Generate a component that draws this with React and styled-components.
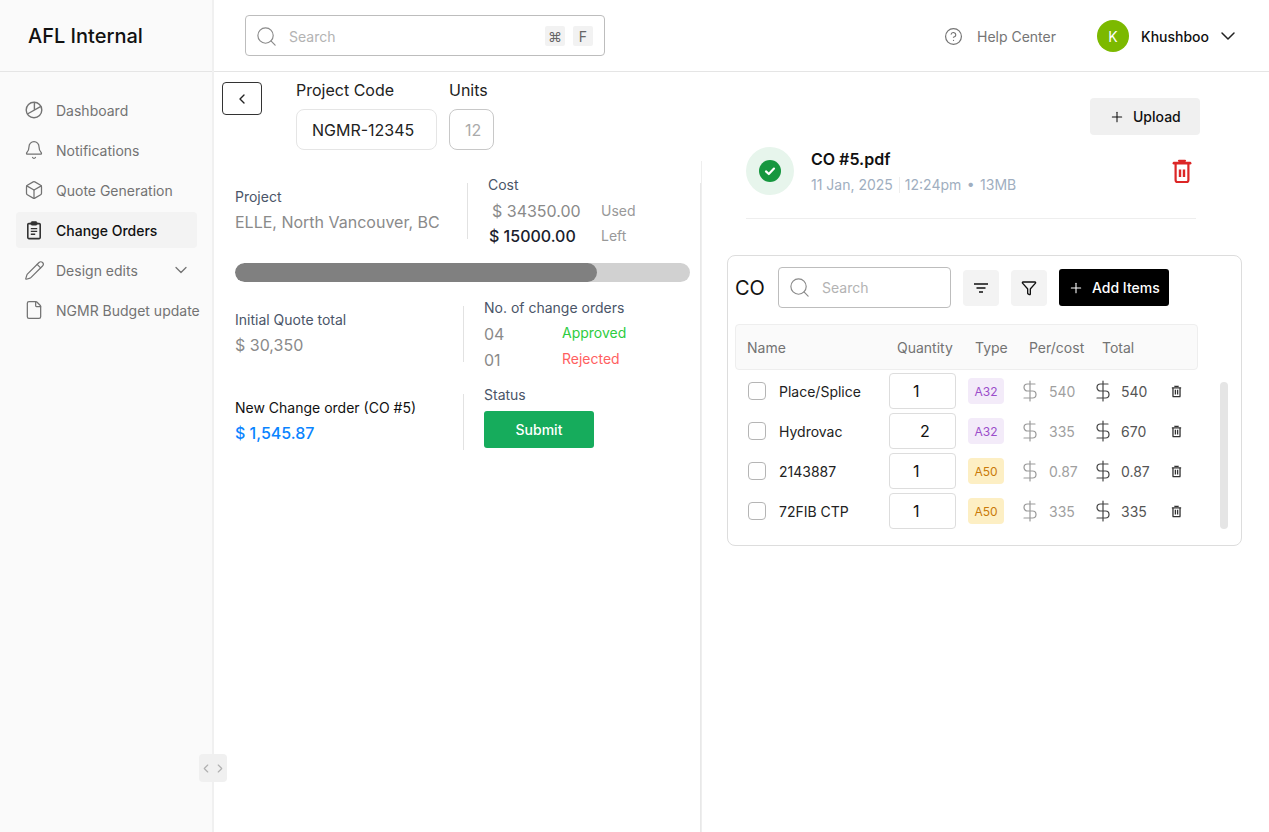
import React from 'react'
import styled, { createGlobalStyle } from 'styled-components'
import {
  Bell, Box, ChevronDown, ChevronLeft, ChevronRight, CircleHelp, DollarSign,
  File, Funnel, Pencil, Plus, Search,
} from 'lucide-react'

const GlobalStyle = createGlobalStyle`
  * { box-sizing: border-box; }
  body {
    margin: 0;
    background: #fff;
    font-family: Inter, "Liberation Sans", sans-serif;
    color: #111;
  }
`

const navItems = [
  { label: 'Dashboard', icon: <PieIcon /> },
  { label: 'Notifications', icon: <Bell size={20} strokeWidth={1.5} /> },
  { label: 'Quote Generation', icon: <Box size={20} strokeWidth={1.5} /> },
  { label: 'Change Orders', icon: <ClipboardIcon />, active: true },
  { label: 'Design edits', icon: <Pencil size={21} strokeWidth={1.4} />, caret: true },
  { label: 'NGMR Budget update', icon: <File size={20} strokeWidth={1.5} /> },
]

const rows = [
  { name: 'Place/Splice', qty: 1, type: 'A32', per: '540', total: '540' },
  { name: 'Hydrovac', qty: 2, type: 'A32', per: '335', total: '670' },
  { name: '2143887', qty: 1, type: 'A50', per: '0.87', total: '0.87' },
  { name: '72FIB CTP', qty: 1, type: 'A50', per: '335', total: '335' },
]

function PieIcon() {
  return (
    <svg width="20" height="20" viewBox="0 0 20 20" fill="none" stroke="currentColor" strokeWidth="1.4" strokeLinecap="round">
      <circle cx="10" cy="10" r="7.8" />
      <path d="M10.4 2.4V9.8M3.4 14L16.9 6.3" />
    </svg>
  )
}

function ClipboardIcon() {
  return (
    <svg width="20" height="20" viewBox="0 0 20 20" fill="none" stroke="#333" strokeWidth="1.6">
      <rect x="3.8" y="3.6" width="12.4" height="15" rx="1" />
      <rect x="7.2" y="1.8" width="5.6" height="3.2" rx=".6" fill="#333" strokeWidth="1" />
      <path d="M6.8 8.6h6.4M6.8 11.4h6.4M6.8 14.2h4.4" strokeWidth="1.4" />
    </svg>
  )
}

function SortIcon() {
  return (
    <svg width="16" height="12" viewBox="0 0 16 12" fill="none" stroke="#111" strokeWidth="1.5">
      <path d="M1 2h14M3.5 6h9M6 10h4" />
    </svg>
  )
}

function SmallTrash() {
  return (
    <svg width="13" height="13" viewBox="0 0 14 14" fill="none" stroke="#333" strokeWidth="1.4">
      <path d="M2 3h10M5.2 2V1.4h3.6V2" />
      <path d="M3.2 3.2v8.8c0 .3.2.6.6.6h6.4c.4 0 .6-.3.6-.6V3.2" />
      <path d="M5.8 5.2v5M8.2 5.2v5" />
    </svg>
  )
}

function RedTrash() {
  return (
    <svg width="20" height="26" viewBox="0 0 20 26" fill="none" stroke="#dc2626" strokeWidth="2.2">
      <path d="M2 5.2h16" strokeWidth="2.8" strokeLinecap="round" />
      <path d="M7 2.8h6" strokeWidth="2.2" strokeLinecap="round" />
      <path d="M3.6 6v16c0 1.2.8 2 1.8 2h9.2c1 0 1.8-.8 1.8-2V6" />
      <path d="M8 11.5v7.5M12 11.5v7.5" strokeWidth="2.4" />
    </svg>
  )
}

function CheckBadge() {
  return (
    <svg width="22" height="22" viewBox="0 0 22 22">
      <circle cx="11" cy="11" r="11" fill="#16973f" />
      <path d="M7 11.4l2.8 2.6L15 8.6" fill="none" stroke="#fff" strokeWidth="2.2" strokeLinecap="round" strokeLinejoin="round" />
    </svg>
  )
}

export default function App() {
  return (
    <Page>
      <GlobalStyle />
      <Sidebar>
        <Logo>AFL Internal</Logo>
        <Nav>
          {navItems.map((item) => (
            <NavItem key={item.label} $active={item.active}>
              <NavIcon>{item.icon}</NavIcon>
              <NavLabel>{item.label}</NavLabel>
              {item.caret && <Caret><ChevronDown size={20} strokeWidth={1.5} /></Caret>}
            </NavItem>
          ))}
        </Nav>
        <CollapseToggle>
          <ChevronLeft size={15} strokeWidth={2} />
          <ChevronRight size={15} strokeWidth={2} />
        </CollapseToggle>
      </Sidebar>

      <Content>
        <Header>
          <SearchBar>
            <Search size={23} strokeWidth={1.2} color="#8a8a8a" />
            <SearchText>Search</SearchText>
            <Key>⌘</Key>
            <Key>F</Key>
          </SearchBar>
          <HeaderRight>
            <HelpLink>
              <CircleHelp size={19} strokeWidth={1.5} />
              Help Center
            </HelpLink>
            <Avatar>K</Avatar>
            <UserName>Khushboo</UserName>
            <ChevronDown size={24} strokeWidth={1.5} color="#222" />
          </HeaderRight>
        </Header>

        <Main>
          <LeftColumn>
            <TopRow>
              <BackButton><ChevronLeft size={16} strokeWidth={2} /></BackButton>
              <Field>
                <FieldLabel>Project Code</FieldLabel>
                <FieldBox $width={141}>NGMR-12345</FieldBox>
              </Field>
              <Field>
                <FieldLabel>Units</FieldLabel>
                <FieldBox $width={45} $muted>12</FieldBox>
              </Field>
            </TopRow>

            <Panel>
              <StatRow>
                <StatLeft $width={232}>
                  <StatLabel>Project</StatLabel>
                  <StatValue>ELLE, North Vancouver, BC</StatValue>
                </StatLeft>
                <VLine />
                <StatRight>
                  <StatLabel>Cost</StatLabel>
                  <CostLine $top={3}>
                    <CostAmount $indent={4}>$ 34350.00</CostAmount>
                    <CostNote>Used</CostNote>
                  </CostLine>
                  <CostLine>
                    <CostAmount $strong>$ 15000.00</CostAmount>
                    <CostNote>Left</CostNote>
                  </CostLine>
                </StatRight>
              </StatRow>

              <Progress><ProgressFill style={{ width: `${(362 / 455) * 100}%` }} /></Progress>

              <StatRow $top={16}>
                <StatLeft $width={228}>
                  <StatLabel>Initial Quote total</StatLabel>
                  <StatValue>$ 30,350</StatValue>
                </StatLeft>
                <VLine />
                <StatRight>
                  <StatLabel>No. of change orders</StatLabel>
                  <CountLine $top={3}>
                    <CountValue>04</CountValue>
                    <CountTag $color="#2ecc40">Approved</CountTag>
                  </CountLine>
                  <CountLine>
                    <CountValue>01</CountValue>
                    <CountTag $color="#ff5f5f">Rejected</CountTag>
                  </CountLine>
                </StatRight>
              </StatRow>

              <StatRow $top={12}>
                <StatLeft $width={228} $pad={13}>
                  <StatLabel $dark>New Change order (CO #5)</StatLabel>
                  <StatValue $blue>$ 1,545.87</StatValue>
                </StatLeft>
                <VLine $top={9} />
                <StatRight>
                  <StatLabel>Status</StatLabel>
                  <SubmitButton>Submit</SubmitButton>
                </StatRight>
              </StatRow>
            </Panel>
          </LeftColumn>

          <RightColumn>
            <UploadRow>
              <UploadButton><Plus size={16} strokeWidth={1.6} />Upload</UploadButton>
            </UploadRow>

            <FileRow>
              <FileBadge><CheckBadge /></FileBadge>
              <FileInfo>
                <FileName>CO #5.pdf</FileName>
                <FileMeta>
                  <span>11 Jan, 2025</span>
                  <MetaBar />
                  <MetaTime>12:24pm • 13MB</MetaTime>
                </FileMeta>
              </FileInfo>
              <FileDelete><RedTrash /></FileDelete>
            </FileRow>

            <Card>
              <Toolbar>
                <CardTitle>CO</CardTitle>
                <CardSearch>
                  <Search size={23} strokeWidth={1.2} color="#8a8a8a" />
                  <SearchText>Search</SearchText>
                </CardSearch>
                <ToolButton><SortIcon /></ToolButton>
                <ToolButton><Funnel size={16} strokeWidth={2} /></ToolButton>
                <AddButton><Plus size={16} strokeWidth={1.6} />Add Items</AddButton>
              </Toolbar>

              <TableHead>
                <span>Name</span>
                <span>Quantity</span>
                <span>Type</span>
                <span>Per/cost</span>
                <span>Total</span>
              </TableHead>

              <TableBody>
                <RowList>
                  {rows.map((row) => (
                    <Row key={row.name}>
                      <Checkbox />
                      <RowName>{row.name}</RowName>
                      <QtyBox $shift={row.qty === 2}>{row.qty}</QtyBox>
                      <TypeTag $kind={row.type}>{row.type}</TypeTag>
                      <Dollar><DollarSign size={24} strokeWidth={1.2} /></Dollar>
                      <Amount>{row.per}</Amount>
                      <Dollar $dark><DollarSign size={24} strokeWidth={1.2} /></Dollar>
                      <Amount $dark>{row.total}</Amount>
                      <SmallTrash />
                    </Row>
                  ))}
                </RowList>
                <ScrollThumb />
              </TableBody>
            </Card>
          </RightColumn>
        </Main>
      </Content>
    </Page>
  )
}

const Page = styled.div`
  display: grid;
  grid-template-columns: 214px 1fr;
  height: 100vh;
  overflow: hidden;
`

const Sidebar = styled.aside`
  position: relative;
  background: #fafafa;
  border-right: 2px solid #f0f0f0;
`

const Logo = styled.div`
  height: 72px;
  padding: 1px 0 0 28px;
  display: flex;
  align-items: center;
  border-bottom: 1px solid #e5e5e5;
  font-size: 20px;
  font-weight: 500;
  color: #111;
`

const Nav = styled.nav`
  display: flex;
  flex-direction: column;
  gap: 4px;
  padding: 20px 0 0 16px;
  width: 197px;
`

const NavItem = styled.div`
  display: flex;
  align-items: center;
  height: 36px;
  padding-left: 8px;
  border-radius: 4px;
  font-size: 14px;
  white-space: nowrap;
  color: ${(p) => (p.$active ? '#111' : '#737373')};
  background: ${(p) => (p.$active ? '#f3f3f3' : 'transparent')};
  font-weight: ${(p) => (p.$active ? 500 : 400)};
`

const NavIcon = styled.span`
  display: flex;
  width: 32px;
  flex: none;
`

const NavLabel = styled.span`
  flex: 1;
`

const Caret = styled.span`
  display: flex;
  margin-right: 6px;
  color: #737373;
`

const CollapseToggle = styled.div`
  position: absolute;
  left: 199px;
  top: 754px;
  width: 28px;
  height: 28px;
  display: flex;
  align-items: center;
  justify-content: center;
  background: #f0f0f0;
  border-radius: 4px;
  color: #b0b0b0;
`

const Content = styled.div`
  display: flex;
  flex-direction: column;
  min-width: 0;
`

const Header = styled.header`
  height: 72px;
  flex: none;
  display: flex;
  align-items: center;
  padding: 1px 29px 0 31px;
  border-bottom: 1px solid #e5e5e5;
`

const SearchBar = styled.div`
  width: 360px;
  height: 41px;
  margin-top: -1px;
  display: flex;
  align-items: center;
  gap: 8px;
  padding: 1px 11px 0 9px;
  border: 1px solid #bdbdbd;
  border-radius: 4px;
`

const SearchText = styled.span`
  flex: 1;
  margin-left: 3px;
  font-size: 14px;
  color: #b3b3b3;
`

const Key = styled.span`
  width: 20px;
  height: 20px;
  display: flex;
  align-items: center;
  justify-content: center;
  background: #f2f2f2;
  border-radius: 2px;
  font-size: 14px;
  color: #666;
`

const HeaderRight = styled.div`
  margin-left: auto;
  display: flex;
  align-items: center;
`

const HelpLink = styled.div`
  display: flex;
  align-items: center;
  gap: 14px;
  margin-right: 41px;
  font-size: 14px;
  color: #757575;
`

const Avatar = styled.div`
  width: 32px;
  height: 32px;
  display: flex;
  align-items: center;
  justify-content: center;
  border-radius: 50%;
  background: #7cb900;
  color: #fff;
  font-size: 14px;
`

const UserName = styled.span`
  margin: 0 7px 0 12px;
  font-size: 14px;
  font-weight: 500;
  color: #111;
`

const Main = styled.main`
  flex: 1;
  display: grid;
  grid-template-columns: 488px 1fr;
  min-height: 0;
`

const LeftColumn = styled.section`
  display: flex;
  flex-direction: column;
`

const TopRow = styled.div`
  display: flex;
  align-items: flex-start;
  padding: 8px 0 0 8px;
  margin-bottom: 11px;
`

const BackButton = styled.button`
  width: 40px;
  height: 33px;
  margin: 2px 34px 0 0;
  padding: 0;
  display: flex;
  align-items: center;
  justify-content: center;
  background: #fff;
  border: 1px solid #333;
  border-radius: 4px;
  color: #222;
`

const Field = styled.div`
  display: flex;
  flex-direction: column;
  gap: 9px;
  margin-right: 12px;
`

const FieldLabel = styled.div`
  font-size: 16px;
  line-height: 20px;
  color: #222;
`

const FieldBox = styled.div`
  width: ${(p) => p.$width}px;
  height: 41px;
  display: flex;
  align-items: center;
  padding-left: 15px;
  border: 1px solid ${(p) => (p.$muted ? '#c8c8c8' : '#e5e5e5')};
  border-radius: 8px;
  font-size: 16px;
  color: ${(p) => (p.$muted ? '#aaa' : '#222')};
`

const Panel = styled.div`
  position: relative;
  flex: 1;
  padding: 14px 11px 0 21px;
  border-right: 1px solid #eeeeee;

  &::after {
    content: '';
    position: absolute;
    top: 22px;
    bottom: 0;
    right: 0;
    width: 1px;
    background: #e8e8e8;
  }
`

const StatRow = styled.div`
  display: flex;
  align-items: flex-start;
  margin-top: ${(p) => p.$top || 0}px;
`

const StatLeft = styled.div`
  width: ${(p) => p.$width}px;
  flex: none;
  padding-top: ${(p) => p.$pad || 12}px;
`

const StatRight = styled.div`
  padding-left: 20px;
  flex: 1;
`

const VLine = styled.div`
  width: 1px;
  height: 56px;
  flex: none;
  margin-top: ${(p) => p.$top || 8}px;
  background: #e2e2e2;
`

const StatLabel = styled.div`
  font-size: 14px;
  line-height: 20px;
  color: ${(p) => (p.$dark ? '#111' : '#4a5568')};
`

const StatValue = styled.div`
  margin-top: 5px;
  font-size: 16px;
  line-height: 20px;
  color: ${(p) => (p.$blue ? '#0a84ff' : '#8a8a8a')};
  font-weight: ${(p) => (p.$blue ? 500 : 400)};
`

const CostLine = styled.div`
  display: flex;
  align-items: center;
  height: 25px;
  margin-top: ${(p) => p.$top || 0}px;
`

const CostAmount = styled.div`
  width: 112px;
  padding-left: ${(p) => p.$indent || 1}px;
  font-size: 16px;
  font-weight: ${(p) => (p.$strong ? 500 : 400)};
  color: ${(p) => (p.$strong ? '#1a202c' : '#8a8a8a')};
`

const CostNote = styled.div`
  padding-left: 1px;
  font-size: 14px;
  color: #999;
`

const Progress = styled.div`
  height: 19px;
  margin-top: 15px;
  border-radius: 10px;
  background: #d1d1d1;
  overflow: hidden;
`

const ProgressFill = styled.div`
  height: 100%;
  border-radius: 10px;
  background: #808080;
`

const CountLine = styled.div`
  display: flex;
  align-items: center;
  height: 26px;
  margin-top: ${(p) => p.$top || 0}px;
`

const CountValue = styled.div`
  width: 78px;
  font-size: 16px;
  color: #8a8a8a;
`

const CountTag = styled.div`
  padding-bottom: 4px;
  font-size: 14px;
  color: ${(p) => p.$color};
`

const SubmitButton = styled.button`
  display: block;
  width: 110px;
  height: 37px;
  margin-top: 6px;
  border: 0;
  border-radius: 3px;
  background: #16ac5c;
  color: #fff;
  font: 500 14px Inter, "Liberation Sans", sans-serif;
`

const RightColumn = styled.section`
  padding-top: 26px;
  min-width: 0;
`

const UploadRow = styled.div`
  display: flex;
  justify-content: flex-end;
  padding-right: 69px;
`

const UploadButton = styled.button`
  width: 110px;
  height: 37px;
  padding: 0 0 0 19px;
  display: flex;
  align-items: center;
  gap: 8px;
  border: 0;
  border-radius: 4px;
  background: #f0f0f0;
  color: #111;
  font: 500 14px Inter, "Liberation Sans", sans-serif;
`

const FileRow = styled.div`
  display: flex;
  align-items: center;
  margin: 12px 73px 0 44px;
  padding-bottom: 23px;
  border-bottom: 1px solid #eee;
`

const FileBadge = styled.div`
  width: 48px;
  height: 48px;
  flex: none;
  display: flex;
  align-items: center;
  justify-content: center;
  border-radius: 50%;
  background: #e7f5ec;
`

const FileInfo = styled.div`
  flex: 1;
  margin-left: 17px;
`

const FileName = styled.div`
  font-size: 16px;
  line-height: 22px;
  font-weight: 600;
  color: #111;
`

const FileMeta = styled.div`
  display: flex;
  align-items: center;
  margin-top: 5px;
  font-size: 14px;
  line-height: 20px;
  color: #a0aec0;
`

const MetaBar = styled.span`
  width: 1px;
  height: 16px;
  margin: 0 5px 0 6px;
  background: #eee;
`

const MetaTime = styled.span`
  word-spacing: 1.5px;
`

const FileDelete = styled.div`
  display: flex;
  margin: 0 4px 0 0;
`

const Card = styled.div`
  width: 515px;
  margin: 36px 0 0 25px;
  padding: 11px 7px 16px;
  border: 1px solid #ddd;
  border-radius: 8px;
`

const Toolbar = styled.div`
  display: flex;
  align-items: center;
  height: 41px;
`

const CardTitle = styled.div`
  width: 43px;
  font-size: 20px;
  color: #111;
`

const CardSearch = styled.div`
  width: 173px;
  height: 41px;
  display: flex;
  align-items: center;
  gap: 8px;
  padding: 0 9px;
  margin-right: 12px;
  border: 1px solid #bdbdbd;
  border-radius: 4px;
`

const ToolButton = styled.button`
  width: 36px;
  height: 36px;
  margin-right: 12px;
  padding: 0;
  display: flex;
  align-items: center;
  justify-content: center;
  border: 0;
  border-radius: 4px;
  background: #f3f3f3;
  color: #111;
`

const AddButton = styled.button`
  width: 110px;
  height: 37px;
  padding: 0 0 0 9px;
  display: flex;
  align-items: center;
  gap: 8px;
  border: 0;
  border-radius: 3px;
  background: #000;
  color: #fff;
  font: 500 14px Inter, "Liberation Sans", sans-serif;
`

const TableHead = styled.div`
  display: grid;
  grid-template-columns: 150px 78px 54px 73px auto;
  align-items: center;
  width: 463px;
  height: 46px;
  margin-top: 16px;
  padding-left: 11px;
  background: #fafafa;
  border: 1px solid #eee;
  border-radius: 4px;
  font-size: 14px;
  color: #737373;
`

const TableBody = styled.div`
  display: flex;
  justify-content: space-between;
  padding: 3px 6px 0 0;
`

const RowList = styled.div`
  display: flex;
  flex-direction: column;
  gap: 4px;
  width: 463px;
`

const Row = styled.div`
  display: grid;
  grid-template-columns: 31px 110px 79px 56px 25px 48px 24px 49px 14px;
  align-items: center;
  height: 36px;
  padding-left: 13px;
  font-size: 14px;
  color: #222;
`

const Checkbox = styled.span`
  width: 18px;
  height: 18px;
  border: 1px solid #b5b5b5;
  border-radius: 4px;
`

const RowName = styled.span`
  color: #222;
`

const QtyBox = styled.div`
  width: 67px;
  height: 36px;
  display: flex;
  align-items: center;
  padding-left: ${(p) => (p.$shift ? 30 : 23)}px;
  border: 1px solid #ddd;
  border-radius: 4px;
  font-size: 16px;
  color: #111;
`

const TypeTag = styled.span`
  width: 36px;
  height: 26px;
  display: flex;
  align-items: center;
  justify-content: center;
  border-radius: 4px;
  font-size: 12px;
  background: ${(p) => (p.$kind === 'A32' ? '#f3ebf9' : '#fdefc4')};
  color: ${(p) => (p.$kind === 'A32' ? '#9b4dca' : '#c97a08')};
`

const Dollar = styled.span`
  display: flex;
  margin-left: -6px;
  color: ${(p) => (p.$dark ? '#444' : '#999')};
`

const Amount = styled.span`
  color: ${(p) => (p.$dark ? '#555' : '#a0a0a0')};
`

const ScrollThumb = styled.div`
  width: 8px;
  height: 147px;
  margin-top: 9px;
  border-radius: 4px;
  background: #e5e5e5;
`
